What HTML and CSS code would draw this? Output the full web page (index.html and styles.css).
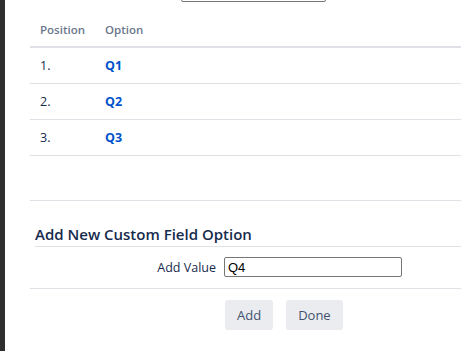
FILE: index.html
```html
<!DOCTYPE html>
<html lang="en">
  <head>
    <meta charset="UTF-8" />
    <title>Custom Field Options</title>
    <link rel="stylesheet" href="styles.css">
  </head>
  <body>
    <div class="frame">
      <div class="search-row">
        <input class="search-input" type="text" />
      </div>

      <table class="options">
        <thead>
          <tr>
            <th class="col-pos">Position</th>
            <th>Option</th>
          </tr>
        </thead>
        <tbody>
          <tr>
            <td class="col-pos">1.</td>
            <td><a href="#">Q1</a></td>
          </tr>
          <tr>
            <td class="col-pos">2.</td>
            <td><a href="#">Q2</a></td>
          </tr>
          <tr>
            <td class="col-pos">3.</td>
            <td><a href="#">Q3</a></td>
          </tr>
          <tr class="row-empty">
            <td colspan="2"></td>
          </tr>
        </tbody>
      </table>

      <form class="add-form">
        <h3 class="add-title">Add New Custom Field Option</h3>
        <div class="field-row">
          <label class="field-label" for="add-value">Add Value</label>
          <input class="field-input" id="add-value" type="text" value="Q4" />
        </div>
        <div class="buttons">
          <button class="btn" type="button">Add</button>
          <button class="btn" type="button">Done</button>
        </div>
      </form>
    </div>
  </body>
</html>
```

FILE: styles.css
```css
:root {
  --text-color: #172b4d;
  --muted-color: #6b778c;
  --link-color: #0052cc;
  --line-color: #dfe1e6;
  --button-bg: #ebecf0;
  --button-text: #42526e;
}

* {
  box-sizing: border-box;
}

html,
body {
  height: 100%;
  margin: 0;
}

body {
  font-family: "Open Sans", "Noto Sans", sans-serif;
  font-size: 12.5px;
  color: var(--text-color);
  background: #fff;
  overflow: hidden;
}

.frame {
  display: flow-root;
  min-height: 100%;
  border-left: 5px solid #2e2e2e;
  padding-left: 25px;
}

.search-row {
  margin-top: -18px;
  padding-left: 151px;
}

.search-input {
  display: block;
  width: 145px;
  height: 20px;
  border: 1px solid #767676;
  border-radius: 2px;
}

.options {
  width: 100%;
  margin-top: 11px;
  border-collapse: collapse;
}

.options th,
.options td {
  text-align: left;
  padding: 0 10px;
}

.options th {
  height: 34px;
  font-size: 11.5px;
  font-weight: 600;
  color: var(--muted-color);
  border-bottom: 2px solid var(--line-color);
}

.options td {
  height: 36px;
  border-bottom: 1px solid var(--line-color);
}

.options .col-pos {
  width: 60px;
}

.options a {
  color: var(--link-color);
  font-weight: 700;
  text-decoration: none;
}

.options .row-empty td {
  height: 45px;
}

.add-form {
  margin: 0;
}

.add-title {
  margin: 22px 0 0 5px;
  padding-bottom: 1px;
  font-size: 15px;
  font-weight: 600;
  line-height: 22px;
  border-bottom: 1px solid var(--line-color);
}

.field-row {
  display: flex;
  align-items: center;
  gap: 8px;
  height: 42px;
  border-bottom: 1px solid var(--line-color);
}

.field-label {
  width: 186px;
  text-align: right;
}

.field-input {
  width: 178px;
  height: 20px;
  padding: 0 3px;
  font-family: "Liberation Sans", Arial, sans-serif;
  font-size: 13px;
  color: #000;
  border: 1px solid #767676;
  border-radius: 2px;
}

.buttons {
  display: flex;
  gap: 13px;
  padding: 11px 0 0 195px;
}

.btn {
  height: 30px;
  padding: 0 12px;
  font-family: inherit;
  font-size: 13px;
  color: var(--button-text);
  background: var(--button-bg);
  border: none;
  border-radius: 3px;
}
```
